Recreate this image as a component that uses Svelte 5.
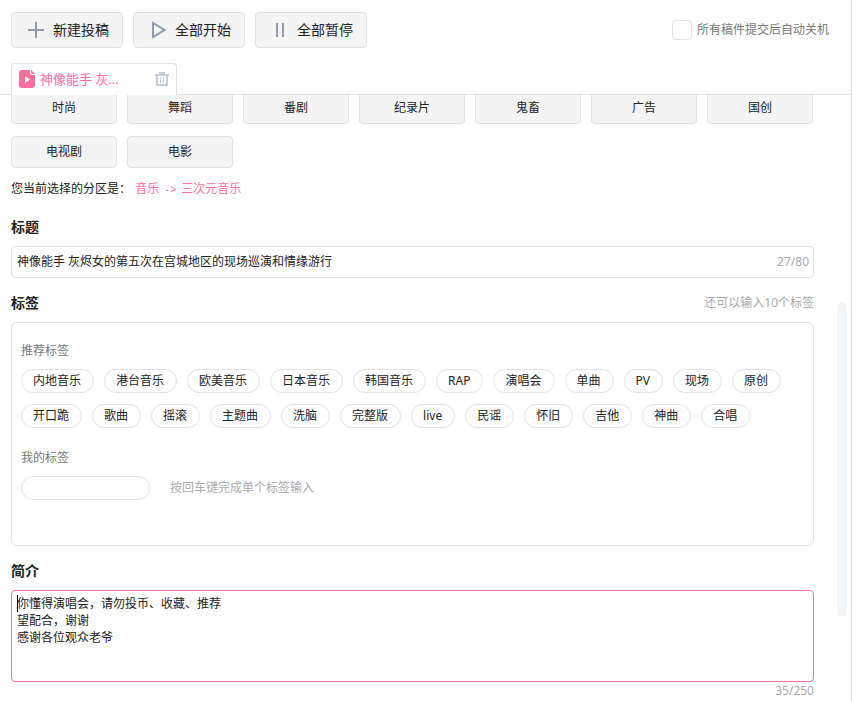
<script lang="ts">
  import { onMount } from 'svelte';

  const TITLE_MAX = 80;
  const INTRO_MAX = 250;

  const categories = ['时尚', '舞蹈', '番剧', '纪录片', '鬼畜', '广告', '国创', '电视剧', '电影'];
  const recommended = [
    '内地音乐', '港台音乐', '欧美音乐', '日本音乐', '韩国音乐', 'RAP', '演唱会', '单曲', 'PV', '现场', '原创',
    '开口跪', '歌曲', '摇滚', '主题曲', '洗脑', '完整版', 'live', '民谣', '怀旧', '吉他', '神曲', '合唱'
  ];

  let shutdown = $state(false);
  let title = $state('神像能手 灰烬女的第五次在宫城地区的现场巡演和情缘游行');
  let tag = $state('');
  let intro = $state('你懂得演唱会，请勿投币、收藏、推荐\n望配合，谢谢\n感谢各位观众老爷');
  let touched = $state(false);
  let introBox: HTMLTextAreaElement;

  function touch(): void {
    touched = true;
  }

  onMount(() => {
    introBox.focus({ preventScroll: true });
    introBox.setSelectionRange(0, 0);
  });
</script>

<main class="shell">
  <header class="top">
    <div class="toolbar">
      <button type="button" class="action">
        <svg width="18" height="18" viewBox="0 0 18 18" fill="none" stroke="#9499ab" stroke-width="2" aria-hidden="true">
          <path d="M1 9h16M9 1v16" />
        </svg>
        新建投稿
      </button>
      <button type="button" class="action">
        <svg width="18" height="18" viewBox="0 0 18 18" fill="none" stroke="#9499ab" stroke-width="2" aria-hidden="true">
          <path d="M4 2v14l11.500-7z" />
        </svg>
        全部开始
      </button>
      <button type="button" class="action">
        <svg width="18" height="18" viewBox="0 0 18 18" fill="none" stroke="#9499ab" stroke-width="2" aria-hidden="true">
          <path d="M6 2v14M12 2v14" />
        </svg>
        全部暂停
      </button>
      <label class="shutdown">
        <input type="checkbox" bind:checked={shutdown} />
        所有稿件提交后自动关机
      </label>
    </div>

    <div class="tab">
      <svg width="16" height="18" viewBox="0 0 16 18" fill="#ff6e9f" aria-hidden="true">
        <path d="M3 0h8v3q0 2 2 2h3v10q0 3-3 3H3q-3 0-3-3V3q0-3 3-3z" />
        <path d="M12 0l4 4h-3q-1 0-1-1z" />
        <path d="M6 6v7l5-3.500z" fill="#fff" />
      </svg>
      <span class="tab-name">神像能手 灰...</span>
      <button type="button" class="remove" aria-label="删除">
        <svg width="14" height="14" viewBox="0 0 14 14" fill="none" stroke="#c9ccd6" stroke-width="2" aria-hidden="true">
          <path d="M0 3h14M4 1h6M2 3v10h10V3" />
          <path d="M5.500 5v6M8.500 5v6" stroke-width="1" />
        </svg>
      </button>
    </div>
  </header>

  <div class="body">
    <div class="categories">
      {#each categories as name}
        <button type="button" class="category">{name}</button>
      {/each}
    </div>

    <p class="current">
      您当前选择的分区是：
      <span class="path">音乐<span class="arrow">-&gt;</span>三次元音乐</span>
    </p>

    <section>
      <h2><label for="title">标题</label></h2>
      <div class="title-box">
        <input id="title" type="text" maxlength={TITLE_MAX} bind:value={title} />
        <span class="count">27/{TITLE_MAX}</span>
      </div>
    </section>

    <section>
      <div class="heading">
        <h2>标签</h2>
        <span class="hint">还可以输入10个标签</span>
      </div>
      <div class="tag-box">
        <h3>推荐标签</h3>
        <div class="tags">
          {#each recommended as name}
            <button type="button" class="tag">{name}</button>
          {/each}
        </div>
        <h3><label for="tag">我的标签</label></h3>
        <div class="mine">
          <input id="tag" type="text" bind:value={tag} />
          <span class="hint">按回车键完成单个标签输入</span>
        </div>
      </div>
    </section>

    <section>
      <h2><label for="intro">简介</label></h2>
      <div class="intro-box">
        <textarea
          id="intro"
          maxlength={INTRO_MAX}
          bind:value={intro}
          bind:this={introBox}
          onkeydown={touch}
          onpointerdown={touch}
          onblur={touch}
        ></textarea>
        {#if !touched}
          <span class="caret"></span>
        {/if}
      </div>
      <div class="count intro-count">35/{INTRO_MAX}</div>
    </section>

    <div class="scrollbar"></div>
  </div>
</main>

<style>
  :global(body) {
    margin: 0;
    background: #fff;
    color: #222;
    font: 12px/20px 'Noto Sans', 'Noto Sans CJK SC', sans-serif;
  }

  button,
  input,
  textarea {
    box-sizing: border-box;
    margin: 0;
    color: inherit;
    font: inherit;
    outline: none;
  }

  button {
    cursor: pointer;
  }

  svg {
    flex: none;
    display: block;
  }

  .shell {
    box-sizing: border-box;
    min-height: 100vh;
    margin-right: 1px;
    border-right: 1px solid #f5dfe6;
  }

  .top {
    position: relative;
    z-index: 1;
    padding: 12px 22px 0 11px;
    background: #fff;
    border-bottom: 1px solid #e2e2e2;
  }

  .toolbar {
    display: flex;
    align-items: center;
    gap: 10px;
  }

  .action {
    display: flex;
    align-items: center;
    gap: 8px;
    height: 36px;
    padding: 0 13px 0 15px;
    border: 1px solid #e2e2e2;
    border-radius: 4px;
    background: #f4f4f4;
    font-size: 14px;
  }

  .shutdown {
    display: flex;
    align-items: center;
    gap: 5px;
    margin-left: auto;
    color: #777;
  }

  .shutdown input {
    appearance: none;
    width: 20px;
    height: 20px;
    border: 1px solid #e2e2e2;
    border-radius: 4px;
    background: #fff;
  }

  .shutdown input:checked {
    background: #ff6e9f;
  }

  .tab {
    box-sizing: border-box;
    display: flex;
    align-items: center;
    gap: 5px;
    width: 166px;
    height: 32px;
    margin: 15px 0 -1px;
    padding: 0 7px 1px;
    border: 1px solid #e2e2e2;
    border-bottom: 0;
    border-radius: 4px 4px 0 0;
    background: #fff;
    color: #ff6e9f;
    font-size: 13px;
  }

  .remove {
    margin-left: auto;
    padding: 0;
    border: 0;
    background: none;
  }

  .body {
    position: relative;
    display: flow-root;
    padding: 0 37px 0 11px;
  }

  .categories {
    display: flex;
    flex-wrap: wrap;
    gap: 12px 10px;
    margin-top: -3px;
  }

  .category {
    width: 106px;
    height: 32px;
    border: 1px solid #e2e2e2;
    border-radius: 4px;
    background: #f4f4f4;
  }

  .current {
    margin: 11px 0 18px;
  }

  .path {
    margin-left: 1px;
    color: #ff6e9f;
  }

  .arrow {
    margin: 0 5px;
    font-family: 'Liberation Mono', monospace;
    font-size: 10px;
    line-height: 10px;
  }

  section {
    margin-bottom: 15px;
  }

  section:last-of-type {
    margin-bottom: 0;
  }

  h2 {
    margin: 0 0 9px;
    font-size: 14px;
    line-height: 20px;
  }

  h3 {
    margin: 0 0 8px;
    color: #777;
    font-size: 12px;
    font-weight: 400;
  }

  .heading {
    display: flex;
    justify-content: space-between;
  }

  .hint,
  .count {
    color: #aaa;
  }

  .title-box {
    box-sizing: border-box;
    display: flex;
    align-items: center;
    height: 32px;
    padding: 0 4px 0 5px;
    border: 1px solid #e2e2e2;
    border-radius: 4px;
  }

  .title-box input {
    flex: 1;
    min-width: 0;
    padding: 0;
    border: 0;
  }

  .tag-box {
    padding: 18px 9px 45px;
    border: 1px solid #e2e2e2;
    border-radius: 6px;
  }

  .tags {
    display: flex;
    flex-wrap: wrap;
    gap: 11px 10px;
    margin-bottom: 20px;
  }

  .tag {
    height: 24px;
    padding: 0 12px 0 11px;
    border: 1px solid #e2e2e2;
    border-radius: 12px;
    background: #fff;
  }

  .mine {
    display: flex;
    align-items: center;
    gap: 20px;
  }

  .mine input {
    width: 129px;
    height: 24px;
    padding: 0 11px;
    border: 1px solid #e2e2e2;
    border-radius: 12px;
  }

  .intro-box {
    position: relative;
  }

  textarea {
    display: block;
    width: 100%;
    height: 92px;
    padding: 4px 5px;
    border: 1px solid #e2e2e2;
    border-radius: 4px;
    line-height: 17px;
    resize: none;
  }

  textarea:focus {
    border-color: #ff6e9f;
  }

  .caret {
    position: absolute;
    top: 5px;
    left: 6px;
    width: 1px;
    height: 17px;
    background: #000;
    pointer-events: none;
  }

  .intro-count {
    height: 19px;
    line-height: 18px;
    text-align: right;
  }

  .scrollbar {
    position: absolute;
    top: 207px;
    right: 4px;
    width: 10px;
    height: 315px;
    border-radius: 5px;
    background: #f4f5f7;
  }
</style>
